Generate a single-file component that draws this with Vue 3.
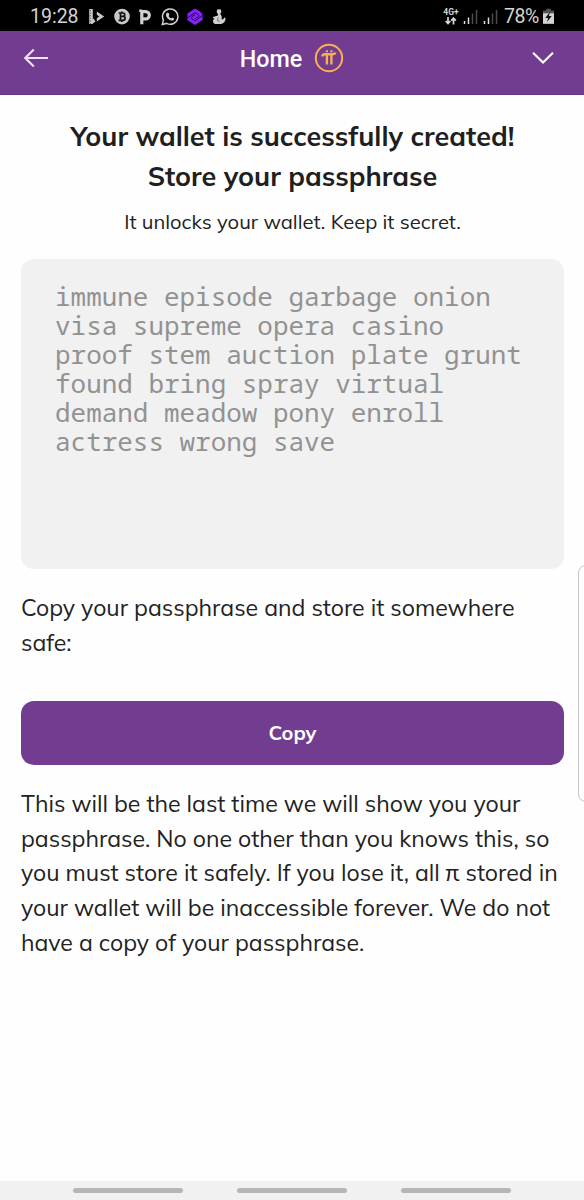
<template>
  <div class="screen">
    <!-- 状态栏 -->
    <div class="status-bar">
      <span class="time">19:28</span>
      <div class="notify-icons">
        <svg width="17" height="18" viewBox="0 0 17 18">
          <path d="M3 1v15M3 14.500l3.500-2.500" stroke="#c8c8c8" stroke-width="3.600" fill="none" />
          <path d="M2.400 2v14" stroke="#444" stroke-width="0.900" stroke-dasharray="1 1.600" />
          <path d="M8.800 3.500l7.400 5-7.400 5v-3.200l2.500-1.800-2.500-1.800z" fill="#c8c8c8" />
        </svg>
        <svg width="16" height="18" viewBox="0 0 16 18">
          <circle cx="8" cy="8.600" r="7.800" fill="#c8c8c8" />
          <path d="M4.600 5h4.200c2.600 0 2.600 3.300 0 3.300H6.600h2.200c3.100 0 3.100 4 0 4H4.600M6.500 5v7M7.800 3.400V5M7.800 12.300v1.600" fill="none" stroke="#111" stroke-width="1.700" />
        </svg>
        <svg width="14" height="18" viewBox="0 0 14 18">
          <path d="M3.800 16.200V2M4 3.700h3.700a3.600 3.600 0 0 1 0 7.200H4" fill="none" stroke="#d0d0d0" stroke-width="3.200" />
          <path d="M1.200 1.500h3v2.500h-3z" fill="#d0d0d0" />
        </svg>
        <svg width="18" height="18" viewBox="0 0 18 18">
          <path d="M1.300 16.500l1.100-4.300A7.700 7.700 0 1 1 5.600 15.400z" fill="none" stroke="#d0d0d0" stroke-width="1.500" />
          <path d="M6.300 4.800l1.400.2.700 2-.8 1.100c.6 1.200 1.400 1.900 2.500 2.400l1-1 2 .9c.1 1.500-1 2.300-2.300 2.200C7.800 12.200 5.200 9.600 5 7c0-1 .5-1.800 1.300-2.200z" fill="#d0d0d0" />
        </svg>
        <svg width="16" height="18" viewBox="0 0 16 18">
          <path d="M8 .5l5 3.100L15.600 6v6L8 16.900.4 12.200V5.500z" fill="#8420fa" />
          <path d="M0 10.300L7 5.200q1-.6 2 0l2.300 1.600q1 1 0 1.900L8 11M16 7.100l-7 5.100q-1 .6-2 0l-2.300-1.600q-1-1 0-1.900L8 6.600" fill="none" stroke="#1c0040" stroke-width="0.900" />
        </svg>
        <svg width="14" height="18" viewBox="0 0 14 18">
          <circle cx="7" cy="3.600" r="2.300" fill="#d0d0d0" />
          <path d="M5.400 1.200l1.200 1 2.200-1-.3 2.600-.3 2.200c1.400 1.400 2 3.500 1.400 5.300 1.400.4 2.300-.5 2.500-1.800l1.500.5c-.1 3.500-1.600 5.300-4.500 6.100H3.500C.5 15.600.3 11.700 2.700 10.200H1V9l5-1.500z" fill="#d0d0d0" />
          <path d="M6.200 9.500l-.7 3 2.200 1.200" fill="none" stroke="#555" stroke-width="0.800" />
        </svg>
      </div>
      <div class="status-right">
        <div class="network">
          <span class="network-type">4G+</span>
          <svg width="12" height="8" viewBox="0 0 12 8">
            <path d="M3 0v6M.7 4L3 6.500 5.300 4M8.500 7.500v-6M6.200 3.700l2.300-2.500 2.300 2.500" fill="none" stroke="#d8d8d8" stroke-width="1.700" />
          </svg>
        </div>
        <svg v-for="n in 2" :key="n" class="signal" width="15" height="16" viewBox="0 0 15 16">
          <path d="M1.500 12v3M5.500 8.500V15" stroke="#e0e0e0" stroke-width="1.500" />
          <path d="M9.500 4.500V15M13.500 1v14" stroke="#4b4b4b" stroke-width="1.500" />
        </svg>
        <span class="battery-text">78%</span>
        <svg class="battery" width="11" height="17" viewBox="0 0 12 17">
          <path d="M3.500 0h5v2H12v5H0V2h3.500z" fill="#555" />
          <path d="M0 5h12v11.500H0z" fill="#d4d4d4" />
          <path d="M7.500 3.500L2.500 10h3l-1 4.500 5-6.500h-3z" fill="#111" />
        </svg>
      </div>
    </div>

    <!-- 顶部导航 -->
    <header class="nav-bar">
      <svg class="back" width="26" height="20" viewBox="0 0 26 20">
        <path d="M25 10H2.500M10.800 1.500L2.300 10l8.500 8.500" fill="none" stroke="#efe0f7" stroke-width="2.200" />
      </svg>
      <div class="nav-title">
        <span>Home</span>
        <svg width="30" height="30" viewBox="0 0 30 30">
          <circle cx="15" cy="15" r="13.200" fill="none" stroke="#f9af54" stroke-width="2" />
          <path d="M8.300 13.500c.2-1.800 1-2.300 2.500-2.300h7.600c1.500 0 2.500-.2 2.900-1.700M12.900 11.500v10M17.400 11.500v10" fill="none" stroke="#f9af54" stroke-width="2.400" />
          <path d="M11.800 7.300h2.200v2h-2.200zM16.300 7.300h2.200v2h-2.200z" fill="#f9af54" />
        </svg>
      </div>
      <svg class="chevron" width="22" height="14" viewBox="0 0 22 14">
        <path d="M1 1.700l10 9.800 10-9.800" fill="none" stroke="#fff" stroke-width="2.200" />
      </svg>
    </header>

    <main class="content">
      <h1 class="title">
        <span>Your wallet is successfully created!</span>
        <span>Store your passphrase</span>
      </h1>
      <p class="subtitle">It unlocks your wallet. Keep it secret.</p>

      <div class="phrase-box">
        <div v-for="line in phraseLines" :key="line">{{ line }}</div>
      </div>

      <p class="text hint">
        <span>Copy your passphrase and store it somewhere</span>
        <span>safe:</span>
      </p>
      <button class="copy-btn">Copy</button>
      <p class="text">
        <span v-for="(line, idx) in warningLines" :key="idx">{{ line }}</span>
      </p>
    </main>

    <div class="edge-panel"></div>

    <footer class="gesture-bar">
      <i v-for="n in 3" :key="n"></i>
    </footer>
  </div>
</template>

<script setup>
const phraseLines = [
  'immune episode garbage onion',
  'visa supreme opera casino',
  'proof stem auction plate grunt',
  'found bring spray virtual',
  'demand meadow pony enroll',
  'actress wrong save'
]

const warningLines = [
  'This will be the last time we will show you your',
  'passphrase. No one other than you knows this, so',
  'you must store it safely. If you lose it, all π stored in',
  'your wallet will be inaccessible forever. We do not',
  'have a copy of your passphrase.'
]
</script>

<style>
body {
  margin: 0;
  background: #fff;
}
</style>

<style scoped>
.screen {
  position: relative;
  display: flex;
  flex-direction: column;
  width: 584px;
  height: 1200px;
  overflow: hidden;
  background: #fefefe;
  color: #222;
  font-family: Mulish, Lato, "Open Sans", sans-serif;
}

svg {
  display: block;
  flex: none;
}

.status-bar {
  display: flex;
  align-items: center;
  height: 31px;
  box-sizing: border-box;
  padding: 2px 30px 0 30px;
  background: #000;
  color: #d4d4d4;
  font-family: Roboto, sans-serif;
  font-size: 20px;
}

.time {
  width: 58px;
  font-size: 19.5px;
}

.notify-icons {
  display: flex;
  align-items: center;
  gap: 8.6px;
}

.status-right {
  display: flex;
  align-items: center;
  margin-left: auto;
}

.network {
  display: flex;
  flex-direction: column;
  align-items: center;
  width: 16px;
  margin-right: 4px;
}

.network-type {
  font-size: 8.5px;
  line-height: 9px;
  font-weight: 700;
}

.signal {
  margin-right: 4.5px;
}

.battery-text {
  width: 37px;
  margin: 0 2px;
  font-size: 19.5px;
  letter-spacing: -0.4px;
}

.nav-bar {
  display: flex;
  align-items: center;
  justify-content: space-between;
  height: 64px;
  box-sizing: border-box;
  padding: 0 30px 10px 23px;
  background: #723c90;
  border-bottom: 1px solid #65347f;
}

.nav-title {
  display: flex;
  align-items: center;
  gap: 12px;
  margin-left: 3px;
  color: #fff;
  font-family: Roboto, sans-serif;
  font-size: 23.3px;
  font-weight: 500;
}

.nav-title span {
  padding-top: 2px;
}

.content {
  flex: 1;
  padding: 21px 20px 0 21px;
}

.title {
  margin: 0;
  display: flex;
  flex-direction: column;
  align-items: center;
  font-size: 27px;
  line-height: 40px;
  font-weight: 700;
  color: #1f1f1f;
  white-space: nowrap;
}

.subtitle {
  margin: 11px 0 0;
  font-size: 20.2px;
  line-height: 30px;
  text-align: center;
}

.phrase-box {
  height: 310px;
  box-sizing: border-box;
  margin-top: 22px;
  padding: 23px 34px;
  border-radius: 13px;
  background: #f1f1f1;
  color: #929292;
  font-family: "Noto Sans Mono", "DejaVu Sans Mono", monospace;
  font-size: 25.95px;
  line-height: 28.9px;
  white-space: nowrap;
}

.text {
  display: flex;
  flex-direction: column;
  align-items: flex-start;
  margin: 0;
  font-size: 23.08px;
  line-height: 34.6px;
  white-space: nowrap;
}

.hint {
  margin-top: 22px;
}

.copy-btn {
  display: block;
  width: 100%;
  height: 64px;
  margin: 41px 0 22px;
  padding: 0 0 1px;
  border: none;
  border-radius: 13px;
  background: #723c90;
  color: #fff;
  font-family: inherit;
  font-size: 20px;
  font-weight: 700;
}

/* 右侧边缘面板把手 */
.edge-panel {
  position: absolute;
  top: 565px;
  right: -10px;
  width: 14px;
  height: 235px;
  border: 1px solid #c6c6c6;
  border-radius: 8px;
  background: #fefefe;
}

.gesture-bar {
  display: flex;
  justify-content: center;
  gap: 54px;
  height: 19px;
  background: #f1f1f1;
}

.gesture-bar i {
  width: 110px;
  height: 5px;
  margin-top: 7px;
  border-radius: 3px;
  background: #b6b6b6;
}
</style>
